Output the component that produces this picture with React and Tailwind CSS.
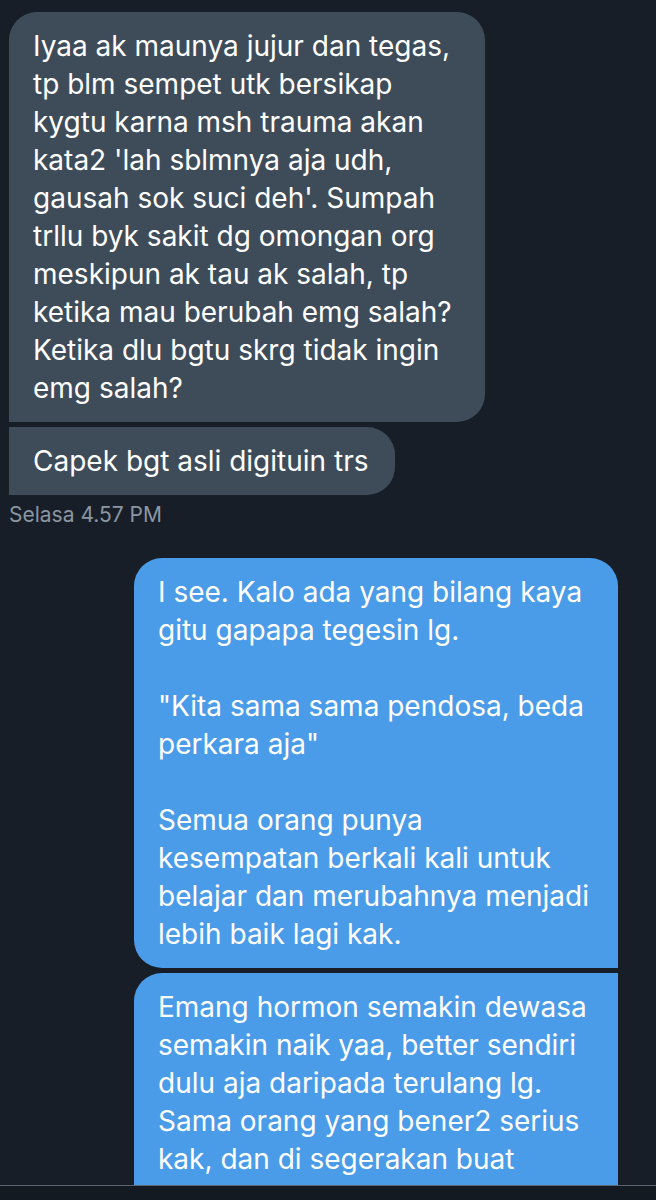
import React from "react";

const received = [
  {
    lines: [
      "Iyaa ak maunya jujur dan tegas,",
      "tp blm sempet utk bersikap",
      "kygtu karna msh trauma akan",
      "kata2 'lah sblmnya aja udh,",
      "gausah sok suci deh'. Sumpah",
      "trllu byk sakit dg omongan org",
      "meskipun ak tau ak salah, tp",
      "ketika mau berubah emg salah?",
      "Ketika dlu bgtu skrg tidak ingin",
      "emg salah?",
    ],
    width: "w-[476px]",
    shape: "rounded-[28px] rounded-bl-none",
  },
  {
    lines: ["Capek bgt asli digituin trs"],
    width: "w-[386px]",
    shape: "rounded-[28px] rounded-tl-none rounded-bl-none",
  },
];

const sent = [
  {
    lines: [
      "I see. Kalo ada yang bilang kaya",
      "gitu gapapa tegesin lg.",
      "",
      "\"Kita sama sama pendosa, beda",
      "perkara aja\"",
      "",
      "Semua orang punya",
      "kesempatan berkali kali untuk",
      "belajar dan merubahnya menjadi",
      "lebih baik lagi kak.",
    ],
    shape: "rounded-[28px] rounded-br-none",
  },
  {
    // continues below the fold; the extra blank line keeps the bubble running under the bar
    lines: [
      "Emang hormon semakin dewasa",
      "semakin naik yaa, better sendiri",
      "dulu aja daripada terulang lg.",
      "Sama orang yang bener2 serius",
      "kak, dan di segerakan buat",
      "",
    ],
    shape: "rounded-[28px] rounded-tr-none rounded-br-none",
  },
];

const Bubble = ({ lines, className }) => (
  <div className={`py-[15px] pl-[24px] pr-4 text-[28px] leading-[38px] text-white ${className}`}>
    {lines.map((line, i) => (
      <div key={i} className="h-[38px] whitespace-nowrap">
        {line}
      </div>
    ))}
  </div>
);

export default function App() {
  return (
    <div
      className="relative h-[1200px] w-[656px] overflow-hidden bg-[#171e28]"
      style={{ fontFamily: "Inter, 'Noto Sans', sans-serif" }}
    >
      <div className="flex flex-col items-start gap-[5px] pl-[9px] pt-[12px]">
        {received.map((m, i) => (
          <Bubble key={i} lines={m.lines} className={`${m.width} bg-[#3e4c5a] ${m.shape}`} />
        ))}
      </div>
      <div className="mt-[8px] pl-[9px] text-[21px] leading-[24px] text-[#8a96a2]">
        Selasa 4.57 PM
      </div>
      <div className="mt-[31px] flex h-[700px] flex-col items-end gap-[5px] pr-[38px]">
        {sent.map((m, i) => (
          <Bubble key={i} lines={m.lines} className={`w-[484px] shrink-0 bg-[#4a9be8] ${m.shape}`} />
        ))}
      </div>
      <div className="absolute bottom-0 left-0 h-[15px] w-full border-t border-[#5b6570] bg-[#141a22]" />
    </div>
  );
}
